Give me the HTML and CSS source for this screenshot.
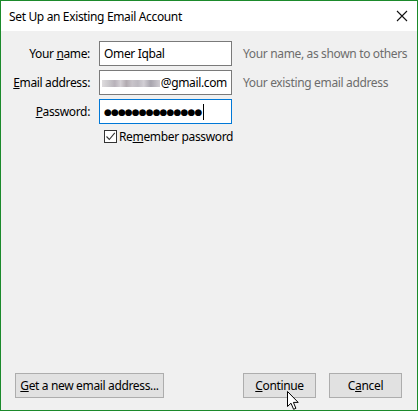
FILE: index.html
```html
<!DOCTYPE html>
<html lang="en">
<head>
    <meta charset="UTF-8">
    <meta name="viewport" content="width=device-width, initial-scale=1.0">
    <title>Set Up an Existing Email Account</title>
    <link rel="stylesheet" href="styles.css">
</head>
<body>
    <div class="window">
        <div class="titlebar">
            <span class="title">Set Up an Existing Email Account</span>
            <svg class="close" width="12" height="12" viewBox="0 0 12 12">
                <path d="M1 1 L11 11 M11 1 L1 11" stroke="#111" stroke-width="1.1" fill="none"/>
            </svg>
        </div>

        <div class="content">
            <div class="form">
                <label class="label">Your <u>n</u>ame:</label>
                <div class="field">Omer Iqbal</div>
                <div class="hint">Your name, as shown to others</div>

                <label class="label"><u>E</u>mail address:</label>
                <div class="field email"><span class="blur"></span>@gmail.com</div>
                <div class="hint">Your existing email address</div>

                <label class="label"><u>P</u>assword:</label>
                <div class="field focused"><span class="dots">●●●●●●●●●●●●●●</span><span class="caret"></span></div>
                <div class="hint"></div>

                <div class="check-row">
                    <span class="checkbox">
                        <svg width="11" height="11" viewBox="0 0 11 11">
                            <path d="M1.5 5.5 L4.3 8.5 L9.8 1.8" stroke="#333" stroke-width="1.1" fill="none"/>
                        </svg>
                    </span>
                    <span>Re<u>m</u>ember password</span>
                </div>
            </div>
        </div>

        <div class="footer">
            <button class="btn wide"><u>G</u>et a new email address...</button>
            <div class="spacer"></div>
            <button class="btn"><u>C</u>ontinue</button>
            <button class="btn">C<u>a</u>ncel</button>
        </div>

        <svg class="pointer" width="14" height="20" viewBox="0 0 14 20">
            <path d="M0.5 0.5 L0.5 15.5 L4 12.2 L6.6 18.3 L8.9 17.3 L6.4 11.4 L11.2 11.4 Z" fill="#fff" stroke="#000" stroke-width="1"/>
        </svg>
    </div>
</body>
</html>
```

FILE: styles.css
```css
body {
    margin: 0;
    font-family: "Noto Sans", "Open Sans", sans-serif;
    font-size: 12px;
    letter-spacing: -0.35px;
    color: #000;
}
.window {
    position: relative;
    width: 418px;
    height: 411px;
    box-sizing: border-box;
    border: 1px solid #1b8a2b;
    background: #f0f0f0;
    display: flex;
    flex-direction: column;
    overflow: hidden;
}
.titlebar {
    height: 30px;
    background: #fff;
    display: flex;
    align-items: center;
    padding: 0 9px 0 8px;
    flex-shrink: 0;
}
.title {
    flex: 1;
    color: #000;
}
.content {
    flex: 1;
    padding-top: 10px;
}
.form {
    display: grid;
    grid-template-columns: 89px 133px auto;
    column-gap: 9px;
    row-gap: 4px;
    align-items: center;
}
.label {
    text-align: right;
    color: #000;
}
.field {
    height: 25px;
    box-sizing: border-box;
    border: 1px solid #7a7a7a;
    background: #fff;
    padding: 0 4px;
    display: flex;
    align-items: center;
    white-space: nowrap;
    overflow: hidden;
}
.field.email {
    padding-left: 2px;
}
.field.focused {
    border-color: #0078d7;
}
.blur {
    display: inline-block;
    width: 58px;
    height: 7px;
    margin-top: 2px;
    margin-right: 1px;
    background: linear-gradient(90deg, #dedcde 0, #c9c7cb 12%, #b8b2ba 22%, #d4d0d5 32%, #b2abb1 42%, #c8c4ca 52%, #bdbac1 62%, #d2cfd5 72%, #a8a5ae 84%, #cfccd2 100%);
    filter: blur(0.5px);
}
.dots {
    font-family: "DejaVu Sans", sans-serif;
    font-size: 9px;
    letter-spacing: -0.9px;
}
.caret {
    display: inline-block;
    width: 1px;
    height: 16px;
    background: #000;
    margin-left: 2px;
}
.hint {
    padding-left: 2px;
    color: #6d6d6d;
    white-space: nowrap;
}
.check-row {
    grid-column: 2 / 4;
    display: flex;
    align-items: center;
    gap: 2px;
    padding-left: 5px;
}
.checkbox {
    width: 13px;
    height: 13px;
    box-sizing: border-box;
    border: 1px solid #333;
    background: #fff;
    display: flex;
    align-items: center;
    justify-content: center;
}
.footer {
    display: flex;
    gap: 13px;
    padding: 0 15px 12px 14px;
}
.spacer {
    flex: 1;
}
.btn {
    height: 25px;
    width: 73px;
    font-family: inherit;
    font-size: 12px;
    letter-spacing: -0.35px;
    white-space: nowrap;
    color: #000;
    background: #e1e1e1;
    border: 1px solid #adadad;
    padding: 0;
}
.btn.wide {
    width: 149px;
}
.pointer {
    position: absolute;
    left: 286px;
    top: 390px;
}
```
